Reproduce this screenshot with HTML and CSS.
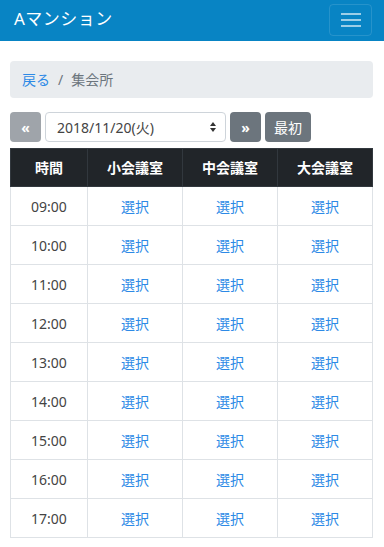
FILE: index.html
```html
<!DOCTYPE html>
<html lang="ja">
<head>
    <meta charset="UTF-8">
    <meta name="viewport" content="width=device-width, initial-scale=1.0">
    <title>Aマンション - 集会所</title>
    <link rel="stylesheet" href="styles.css">
</head>
<body>

    <nav class="navbar">
        <span class="brand">Aマンション</span>
        <button class="toggler" type="button">
            <svg width="22" height="18" viewBox="0 0 22 18">
                <path d="M1 3h20M1 9h20M1 15h20" stroke="rgba(255,255,255,0.6)" stroke-width="2"/>
            </svg>
        </button>
    </nav>

    <section class="icerik">
        <ol class="breadcrumb">
            <li><a href="#">戻る</a></li>
            <li class="ayrac">/</li>
            <li class="aktif">集会所</li>
        </ol>

        <div class="tarihSec">
            <button class="btn pasif" type="button">&laquo;</button>
            <div class="secim">
                <span>2018/11/20(火)</span>
                <svg width="8" height="12" viewBox="0 0 8 12">
                    <path d="M4 1L7 5H1zM4 11L1 7h6z" fill="#333"/>
                </svg>
            </div>
            <button class="btn" type="button">&raquo;</button>
            <button class="btn" type="button">最初</button>
        </div>

        <table class="tablo">
            <thead>
                <tr>
                    <th>時間</th>
                    <th>小会議室</th>
                    <th>中会議室</th>
                    <th>大会議室</th>
                </tr>
            </thead>
            <tbody>
                <tr><td>09:00</td><td><a href="#">選択</a></td><td><a href="#">選択</a></td><td><a href="#">選択</a></td></tr>
                <tr><td>10:00</td><td><a href="#">選択</a></td><td><a href="#">選択</a></td><td><a href="#">選択</a></td></tr>
                <tr><td>11:00</td><td><a href="#">選択</a></td><td><a href="#">選択</a></td><td><a href="#">選択</a></td></tr>
                <tr><td>12:00</td><td><a href="#">選択</a></td><td><a href="#">選択</a></td><td><a href="#">選択</a></td></tr>
                <tr><td>13:00</td><td><a href="#">選択</a></td><td><a href="#">選択</a></td><td><a href="#">選択</a></td></tr>
                <tr><td>14:00</td><td><a href="#">選択</a></td><td><a href="#">選択</a></td><td><a href="#">選択</a></td></tr>
                <tr><td>15:00</td><td><a href="#">選択</a></td><td><a href="#">選択</a></td><td><a href="#">選択</a></td></tr>
                <tr><td>16:00</td><td><a href="#">選択</a></td><td><a href="#">選択</a></td><td><a href="#">選択</a></td></tr>
                <tr><td>17:00</td><td><a href="#">選択</a></td><td><a href="#">選択</a></td><td><a href="#">選択</a></td></tr>
            </tbody>
        </table>
    </section>

</body>
</html>
```

FILE: styles.css
```css
body {
    margin: 0;
    padding: 0;
    font-family: "Noto Sans", "Noto Sans CJK JP", sans-serif;
    font-size: 14px;
    line-height: 21px;
    color: #333;
    background-color: #fff;
}

a {
    color: #2d8ae6;
    text-decoration: none;
}

.navbar {
    height: 41px;
    box-sizing: border-box;
    padding: 0 12px 0 14px;
    background-color: #0884c4;
    display: flex;
    flex-direction: row;
    justify-content: space-between;
    align-items: center;
}

.brand {
    color: #fff;
    font-size: 17px;
    letter-spacing: 0.5px;
    margin-top: -4px;
}

.toggler {
    width: 43px;
    height: 32px;
    margin-top: -2px;
    padding: 0;
    background-color: transparent;
    border: 1px solid rgba(255, 255, 255, 0.12);
    border-radius: 4px;
    display: flex;
    justify-content: center;
    align-items: center;
}

.icerik {
    padding: 20px 11px 0 10px;
}

.breadcrumb {
    list-style: none;
    margin: 0;
    padding: 8px 12px;
    background-color: #e9ecef;
    border-radius: 4px;
    display: flex;
    flex-direction: row;
    color: #6c757d;
}

.ayrac {
    padding: 0 8px;
}

.tarihSec {
    margin-top: 14px;
    display: flex;
    flex-direction: row;
    gap: 4px;
    height: 30px;
}

.btn {
    height: 30px;
    padding: 0 9px;
    min-width: 31px;
    border: none;
    border-radius: 4px;
    background-color: #6c757d;
    color: #fff;
    font-family: inherit;
    font-size: 14px;
    font-weight: bold;
}

.btn:last-child {
    font-weight: normal;
}

.pasif {
    opacity: 0.65;
}

.secim {
    width: 181px;
    box-sizing: border-box;
    border: 1px solid #ced4da;
    border-radius: 4px;
    padding: 0 8px 0 11px;
    display: flex;
    justify-content: space-between;
    align-items: center;
    color: #444;
}

.tablo {
    margin-top: 6px;
    width: 100%;
    border-collapse: collapse;
    text-align: center;
}

.tablo th {
    height: 37px;
    padding: 0;
    background-color: #212529;
    color: #fff;
    border: 1px solid #32383e;
    font-weight: bold;
}

.tablo td {
    height: 38px;
    padding: 0;
    border: 1px solid #dee2e6;
    color: #444;
}

.tablo th:first-child {
    width: 76px;
}

.tablo th:nth-child(2),
.tablo th:nth-child(3) {
    width: 94px;
}
```
